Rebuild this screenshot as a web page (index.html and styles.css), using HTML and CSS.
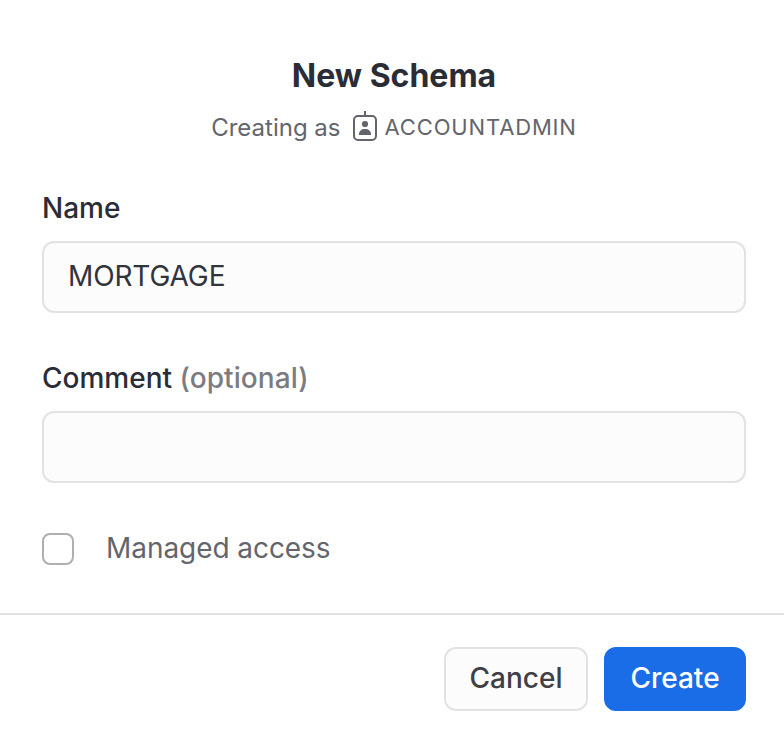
FILE: index.html
```html
<!DOCTYPE html>
<html lang="en">
<head>
<meta charset="utf-8">
<title>New Schema</title>
<link rel="stylesheet" href="styles.css">
</head>
<body>
<form class="dialog">
  <header class="header">
    <h1 class="title">New Schema</h1>
    <div class="role">
      <span class="role-label">Creating as</span>
      <svg class="badge" width="26" height="32" viewBox="0 0 26 32" aria-hidden="true">
        <rect x="2" y="6" width="22" height="24" rx="4" fill="none" stroke="currentColor" stroke-width="2"/>
        <path d="M13 1v5" stroke="currentColor" stroke-width="2"/>
        <circle cx="13" cy="14" r="3.1" fill="currentColor"/>
        <path d="M7 25v-.7C7 21 9.500 19 13 19s6 2 6 5.300v.7z" fill="currentColor"/>
      </svg>
      <span class="role-name">ACCOUNTADMIN</span>
    </div>
  </header>
  <main class="fields">
    <div class="field">
      <label class="label" for="name">Name</label>
      <input class="input" id="name" type="text" value="MORTGAGE">
    </div>
    <div class="field">
      <label class="label" for="comment">Comment <span class="optional">(optional)</span></label>
      <input class="input" id="comment" type="text">
    </div>
    <label class="check"><input class="box" type="checkbox"><span class="check-text">Managed access</span></label>
  </main>
  <footer class="footer">
    <button class="button" type="button">Cancel</button>
    <button class="button primary" type="button">Create</button>
  </footer>
</form>
</body>
</html>
```

FILE: styles.css
```css
* { box-sizing: border-box; }
body { margin: 0; background: #fff; color: #2b2d36; font-family: Inter, sans-serif; }
.dialog { height: 736px; display: flex; flex-direction: column; }
.header { height: 188px; padding: 56px 0 0 4px; display: flex; flex-direction: column; align-items: center; }
.title { margin: 0; font-size: 32px; line-height: 40px; font-weight: 700; }
.role { display: flex; align-items: center; height: 32px; margin-top: 14px; color: #64656c; font-size: 24px; }
.role-label, .role-name { padding-top: 2px; }
.badge { margin: 0 7px 0 11px; flex: none; }
.role-name { font-size: 22px; letter-spacing: 0.85px; }
.fields { padding: 0 38px 0 42px; height: 425px; }
.field { height: 170px; }
.label { display: block; height: 53px; line-height: 40px; font-size: 28px; font-weight: 500; }
.optional { color: #7b7c81; letter-spacing: 0.1px; }
.input { display: block; width: 100%; height: 72px; border: 2px solid #e2e2e2; border-radius: 12px; background: #fcfcfc; padding: 0 24px 2px; font: 400 28px Inter, sans-serif; letter-spacing: -0.12px; color: #32343c; outline: 0; }
.check { display: flex; align-items: center; height: 42px; gap: 32px; font-size: 28px; color: #64656c; }
.check-text { padding-bottom: 2px; letter-spacing: -0.06px; }
.box { appearance: none; margin: 0; width: 32px; height: 32px; border: 2px solid #aeafb3; border-radius: 8px; background: #fff; }
.footer { border-top: 2px solid #e1e1e1; height: 123px; padding: 32px 38px 0 0; display: flex; justify-content: flex-end; gap: 16px; }
.button { width: 144px; height: 64px; border: 2px solid #e2e2e2; border-radius: 12px; background: #fcfcfc; font: 500 28px Inter, sans-serif; color: #3f4046; padding: 0 0 2px; }
.primary { width: 142px; background: #1a6ce7; border-color: #1a6ce7; color: #fff; }
```
